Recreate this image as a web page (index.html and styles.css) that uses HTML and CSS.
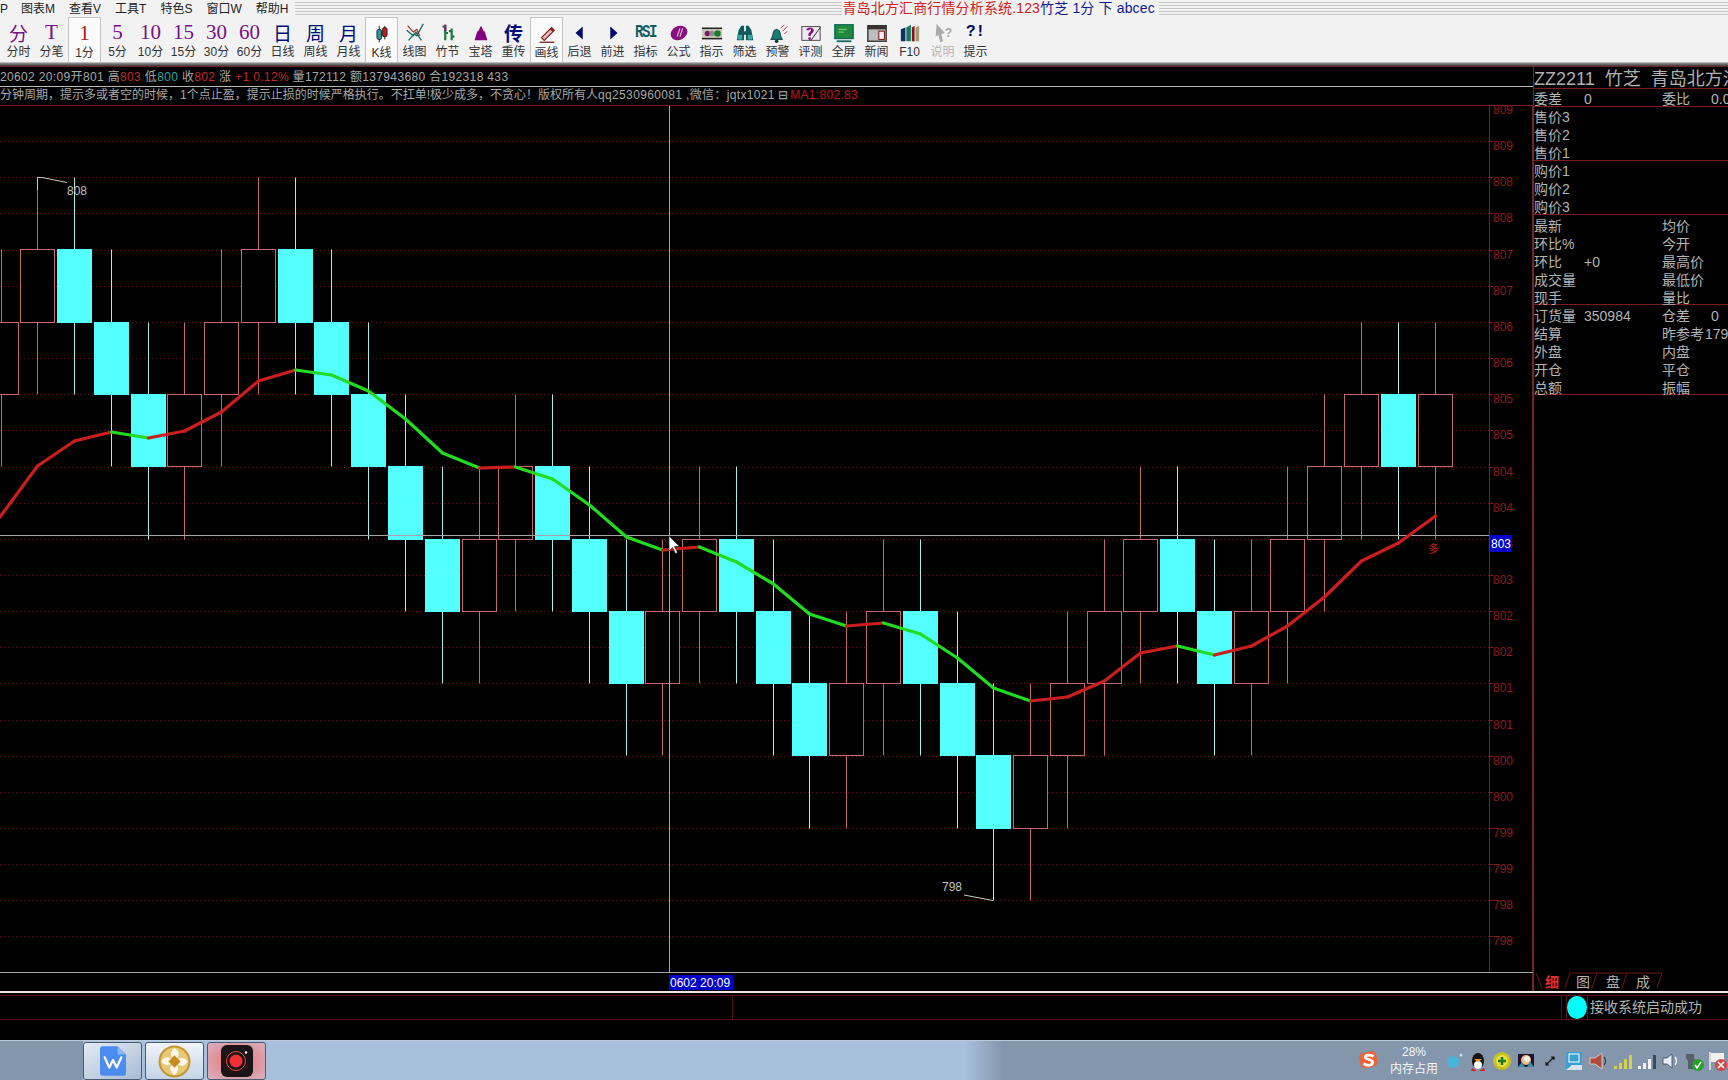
FILE: index.html
```html
<!DOCTYPE html>
<html lang="zh-CN">
<head>
<meta charset="utf-8">
<title>青岛北方汇商行情分析系统</title>
<link rel="stylesheet" href="styles.css">
</head>
<body>
<div class="menubar">
  <span class="menu-item first">P</span>
  <span class="menu-item">图表M</span>
  <span class="menu-item">查看V</span>
  <span class="menu-item">工具T</span>
  <span class="menu-item">特色S</span>
  <span class="menu-item">窗口W</span>
  <span class="menu-item">帮助H</span>
  <span class="stripes left"></span>
  <span class="app-title"><span class="t-red">青岛北方汇商行情分析系统.123</span><span class="t-blue">竹芝 1分 下 abcec</span></span>
  <span class="stripes"></span>
</div>

<div class="toolbar">
  <div class="tb"><span class="tb-top g-purple">分</span><span class="tb-label">分时</span></div>
  <div class="tb"><span class="tb-top g-purple g-serif">T</span><span class="tb-label">分笔</span></div>
  <div class="tb on"><span class="tb-top g-red g-serif">1</span><span class="tb-label">1分</span></div>
  <div class="tb"><span class="tb-top g-purple g-serif">5</span><span class="tb-label">5分</span></div>
  <div class="tb"><span class="tb-top g-purple g-serif">10</span><span class="tb-label">10分</span></div>
  <div class="tb"><span class="tb-top g-purple g-serif">15</span><span class="tb-label">15分</span></div>
  <div class="tb"><span class="tb-top g-purple g-serif">30</span><span class="tb-label">30分</span></div>
  <div class="tb"><span class="tb-top g-purple g-serif">60</span><span class="tb-label">60分</span></div>
  <div class="tb"><span class="tb-top g-navy">日</span><span class="tb-label">日线</span></div>
  <div class="tb"><span class="tb-top g-navy">周</span><span class="tb-label">周线</span></div>
  <div class="tb"><span class="tb-top g-navy">月</span><span class="tb-label">月线</span></div>
  <div class="tb on"><span class="tb-top"><svg class="ico" viewBox="0 0 24 24"><path d="M9 3v18M15 3v15" stroke="#222" stroke-width="1"/><rect x="6.5" y="7" width="5" height="11" rx="2" fill="#2a9a94" stroke="#124"/><rect x="12.5" y="5" width="5" height="10" rx="2" fill="#b02028" stroke="#411"/></svg></span><span class="tb-label">K线</span></div>
  <div class="tb"><span class="tb-top"><svg class="ico" viewBox="0 0 24 24"><path d="M3 9l7 6 3-4 6 9M5 20l6-7 3 2 7-13" fill="none" stroke="#0f6a62" stroke-width="1.4"/><path d="M4 4l6 7 4-3 3 7" fill="none" stroke="#a02020" stroke-width="1.2"/></svg></span><span class="tb-label">线图</span></div>
  <div class="tb"><span class="tb-top"><svg class="ico" viewBox="0 0 24 24"><path d="M9 3v17M9 5H6M9 12h3M16 7v13M16 10h-3M16 16h3" fill="none" stroke="#1a7a3a" stroke-width="2.4"/><path d="M9 3v7" stroke="#7a2a6a" stroke-width="2.4"/></svg></span><span class="tb-label">竹节</span></div>
  <div class="tb"><span class="tb-top"><svg class="ico" viewBox="0 0 24 24"><path d="M12 4l3 6h1l3 10H5l3-10h1z" fill="#800080"/></svg></span><span class="tb-label">宝塔</span></div>
  <div class="tb"><span class="tb-top g-navy g-bold">传</span><span class="tb-label">重传</span></div>
  <div class="tb on"><span class="tb-top"><svg class="ico" viewBox="0 0 24 24"><path d="M6 16L17 5l3 3L9 19z" fill="#e8b8b8" stroke="#7a1a1a" stroke-width="1.2"/><path d="M16 6l3 3" stroke="#a01818" stroke-width="2.5"/><path d="M4 21h16" stroke="#7a1a1a" stroke-width="1.4"/></svg></span><span class="tb-label">画线</span></div>
  <div class="tb"><span class="tb-top"><svg class="ico" viewBox="0 0 24 24"><path d="M15 5v14l-8-7z" fill="#000a70"/></svg></span><span class="tb-label">后退</span></div>
  <div class="tb"><span class="tb-top"><svg class="ico" viewBox="0 0 24 24"><path d="M9 5v14l8-7z" fill="#000a70"/></svg></span><span class="tb-label">前进</span></div>
  <div class="tb"><span class="tb-top g-rsi">RSI</span><span class="tb-label">指标</span></div>
  <div class="tb"><span class="tb-top"><svg class="ico" viewBox="0 0 24 24"><ellipse cx="12" cy="12" rx="9.500" ry="7.500" transform="rotate(-25 12 12)" fill="#8a1080"/><path d="M10 16l3-9M13 16l3-9" stroke="#e8c0e0" stroke-width="1.2"/></svg></span><span class="tb-label">公式</span></div>
  <div class="tb"><span class="tb-top"><svg class="ico wide" viewBox="0 0 24 24"><rect x="1" y="6" width="22" height="2" fill="#222"/><rect x="1" y="17" width="22" height="2" fill="#222"/><rect x="1" y="8" width="22" height="9" fill="#cfc8b8"/><circle cx="7" cy="12.500" r="3" fill="#7a1a6a"/><circle cx="12" cy="12.500" r="3" fill="#8a8a8a"/><circle cx="18" cy="12.500" r="3.500" fill="#1a7a2a"/></svg></span><span class="tb-label">指示</span></div>
  <div class="tb"><span class="tb-top"><svg class="ico" viewBox="0 0 24 24"><path d="M3 20l2-11 3-5h3v6h2V4h3l3 5 2 11h-8v-6h-2v6z" fill="#0f5a5a"/><rect x="4" y="14" width="5" height="5" fill="#3aa8a0"/><rect x="15" y="14" width="5" height="5" fill="#3aa8a0"/></svg></span><span class="tb-label">筛选</span></div>
  <div class="tb"><span class="tb-top"><svg class="ico" viewBox="0 0 24 24"><path d="M4 19c2-2 2-4 3-8s6-4 7 0 1 6 3 8z" fill="#1a7a78" stroke="#0c3a3a"/><circle cx="10.500" cy="21" r="2" fill="#0c3a3a"/><path d="M15 7l4-4M17 10l5-5M19 13l3-3" stroke="#c02040" stroke-width="1"/></svg></span><span class="tb-label">预警</span></div>
  <div class="tb"><span class="tb-top"><svg class="ico" viewBox="0 0 24 24"><rect x="2" y="5" width="20" height="15" fill="#f0e8f0" stroke="#444"/><path d="M12 20L22 6" stroke="#222"/><path d="M7 9c0-4 8-4 8 0 0 3-3 3-3 6h-3c0-4 3-4 3-6s-2-1-2 0z" fill="#8a1080"/><circle cx="10.500" cy="18" r="1.500" fill="#8a1080"/></svg></span><span class="tb-label">评测</span></div>
  <div class="tb"><span class="tb-top"><svg class="ico" viewBox="0 0 24 24"><rect x="2" y="3" width="20" height="15" fill="#1f8a3a" stroke="#0f6a5a" stroke-width="1.500"/><path d="M6 8h9M6 11h6" stroke="#90d890"/><path d="M4 21h16" stroke="#0f6a5a" stroke-width="2"/></svg></span><span class="tb-label">全屏</span></div>
  <div class="tb"><span class="tb-top"><svg class="ico" viewBox="0 0 24 24"><rect x="2" y="4" width="20" height="17" fill="#bcbcbc" stroke="#333" stroke-width="1.500"/><rect x="2" y="4" width="20" height="4" fill="#3a3030"/><rect x="14" y="10" width="6" height="9" fill="#f4f0f0" stroke="#700"/></svg></span><span class="tb-label">新闻</span></div>
  <div class="tb"><span class="tb-top"><svg class="ico" viewBox="0 0 24 24"><path d="M2 8l5-2v15H2z" fill="#103060"/><path d="M8 6l5-3v18H8z" fill="#1a7a60"/><path d="M14 6l3-2v17h-3z" fill="#8a1020"/><path d="M18 6l4-2v17h-4z" fill="#a09a70"/></svg></span><span class="tb-label">F10</span></div>
  <div class="tb"><span class="tb-top"><svg class="ico" viewBox="0 0 24 24"><path d="M5 2l9 10-4 1 2 8-3 1-2-8-3 2z" fill="#a8a8a8"/><text x="14" y="16" class="ico-q">?</text></svg></span><span class="tb-label dim">说明</span></div>
  <div class="tb"><span class="tb-top g-tip">?!</span><span class="tb-label">提示</span></div>
</div>

<div class="sep"></div>

<div class="main">
  <section class="chart-col">
    <div class="quote">20602 20:09开801 高<b class="red">803</b> 低<b class="teal">800</b> 收<b class="red">802</b> 涨 <b class="red">+1 0.12%</b> 量172112 额137943680 合192318 433</div>
    <div class="note">分钟周期，提示多或者空的时候，1个点止盈，提示止损的时候严格执行。不扛单!极少成多，不贪心！版权所有人<span class="latin">qq2530960081 ,微信：jqtx1021</span> <span class="boxmark">⊟</span><b class="ma">MA1:802.83</b></div>
    <svg id="chart" class="chart" viewBox="0 106 1533 885" width="1533" height="885"></svg>
  </section>

  <aside class="panel">
    <div class="p-title">ZZ2211&nbsp; 竹芝 &nbsp;青岛北方汇商行情</div>
    <div class="p-sec rows1">
      <span>委差</span><span>0</span><span>委比</span><span>0.00</span>
    </div>
    <div class="p-sec rows3">
      <span class="wide-l">售价3</span>
      <span class="wide-l">售价2</span>
      <span class="wide-l">售价1</span>
    </div>
    <div class="p-sec rows3">
      <span class="wide-l">购价1</span>
      <span class="wide-l">购价2</span>
      <span class="wide-l">购价3</span>
    </div>
    <div class="p-sec rows5">
      <span>最新</span><span></span><span>均价</span><span></span>
      <span>环比%</span><span></span><span>今开</span><span></span>
      <span>环比</span><span>+0</span><span>最高价</span><span></span>
      <span>成交量</span><span></span><span>最低价</span><span></span>
      <span>现手</span><span></span><span>量比</span><span></span>
    </div>
    <div class="p-sec rows5">
      <span>订货量</span><span>350984</span><span>仓差</span><span>0</span>
      <span>结算</span><span></span><span>昨参考</span><span class="shift">179</span>
      <span>外盘</span><span></span><span>内盘</span><span></span>
      <span>开仓</span><span></span><span>平仓</span><span></span>
      <span>总额</span><span></span><span>振幅</span><span></span>
    </div>
    <svg class="tabs" viewBox="0 0 195 19" width="195" height="19">
      <path class="tab-line" d="M2 1L8 16M31 16L36 1H128L123 16M58 16L63 1M88 16L93 1"/>
      <text class="tab-on" x="11" y="15">细</text>
      <text class="tab" x="42" y="15">图</text>
      <text class="tab" x="72" y="15">盘</text>
      <text class="tab" x="102" y="15">成</text>
    </svg>
  </aside>
</div>

<div class="status">
  <div class="status-row">
    <div class="st-a"></div>
    <div class="st-b"></div>
    <div class="st-dot"><span class="dot"></span></div>
    <div class="st-text">接收系统启动成功</div>
  </div>
</div>

<div class="taskbar">
  <div class="task">
    <svg class="task-ico" viewBox="0 0 28 32"><path d="M3 0h16l9 9v20a3 3 0 0 1-3 3H3a3 3 0 0 1-3-3V3a3 3 0 0 1 3-3z" fill="#4a8cf0"/><path d="M19 0l9 9h-9z" fill="#8ab6f8"/><path d="M5 12l5 11 4-8 4 8 5-11" fill="none" stroke="#fff" stroke-width="2.400" stroke-linejoin="round" stroke-linecap="round"/></svg>
  </div>
  <div class="task light">
    <svg class="task-ico coin" viewBox="0 0 32 32"><circle cx="16" cy="16" r="15.500" fill="#c8962e"/><circle cx="16" cy="16" r="13.500" fill="#e6c878"/><g fill="#fbf6ea"><path d="M16 16C11 11 12 6 16 3c5 3 6 8 0 13z"/><path d="M16 16C11 11 12 6 16 3c5 3 6 8 0 13z" transform="rotate(90 16 16)"/><path d="M16 16C11 11 12 6 16 3c5 3 6 8 0 13z" transform="rotate(180 16 16)"/><path d="M16 16C11 11 12 6 16 3c5 3 6 8 0 13z" transform="rotate(270 16 16)"/></g><path d="M16 10l6 6-6 6-6-6z" fill="#c78a1e"/></svg>
  </div>
  <div class="task rec">
    <svg class="task-ico big" viewBox="0 0 32 32"><rect width="32" height="32" rx="6" fill="#1c1416"/><circle cx="15" cy="16" r="6.500" fill="#f03034"/><circle cx="15" cy="16" r="9.500" fill="none" stroke="#e84a3a" stroke-width="1"/><circle cx="25" cy="7.500" r="1.200" fill="#fff"/></svg>
  </div>
  <div class="tray">
    <svg class="t-s" viewBox="0 0 24 24"><rect x="2" y="3" width="19" height="17" rx="5" transform="rotate(-12 12 12)" fill="#e8663a"/><path d="M17 8c-3-2-9-2-9 1s9 2 8 6-7 3-10 1" fill="none" stroke="#fff" stroke-width="3"/></svg>
    <div class="mem"><span>28%</span><span>内存占用</span></div>
    <svg class="t-i" viewBox="0 0 24 24"><circle cx="11" cy="13" r="6" fill="#4ab4d8"/><circle cx="19" cy="6" r="1.500" fill="#bfe4f0"/></svg>
    <svg class="t-i" viewBox="0 0 24 24"><ellipse cx="12" cy="12" rx="6" ry="8" fill="#111"/><ellipse cx="12" cy="16" rx="4" ry="4" fill="#fff"/><path d="M8 10h8l-4 3z" fill="#f0a020"/><path d="M6 19l5 3H5zM18 19l-5 3h6z" fill="#d82020"/></svg>
    <svg class="t-i" viewBox="0 0 24 24"><circle cx="12" cy="12" r="9" fill="#c8c020"/><circle cx="12" cy="12" r="6" fill="#e8e040"/><path d="M12 8v8M8 12h8" stroke="#1a7a20" stroke-width="2.500"/></svg>
    <svg class="t-i" viewBox="0 0 24 24"><rect x="4" y="5" width="16" height="13" fill="#201028"/><circle cx="12" cy="11" r="5" fill="#e8c080"/><circle cx="13" cy="10" r="3" fill="#f8f0f0"/><path d="M4 18l4-5 3 5zM20 18l-4-6-3 6z" fill="#3a90a0"/></svg>
    <svg class="t-i" viewBox="0 0 24 24"><path d="M8 16l8-8M13 8h3v3M8 13v3h3" fill="none" stroke="#111" stroke-width="1.100"/></svg>
    <svg class="t-i" viewBox="0 0 24 24"><rect x="4" y="3" width="16" height="18" fill="#3aa0d0"/><rect x="7" y="5" width="10" height="8" fill="none" stroke="#fff"/><path d="M4 21l6-5h10v5z" fill="#d8e4e8"/></svg>
    <svg class="t-i" viewBox="0 0 24 24"><path d="M4 9h5l7-5v16l-7-5H4z" fill="#b04a3a" stroke="#e8d8d0" stroke-width=".8"/><path d="M18 8c2 2 2 6 0 8" fill="none" stroke="#333" stroke-width="1.200"/></svg>
    <svg class="t-i" viewBox="0 0 24 24"><path d="M4 17h3v3H4zM9 14h3v6H9zM14 10h3v10h-3zM19 6h3v14h-3z" fill="#d8d048"/></svg>
    <svg class="t-i" viewBox="0 0 24 24"><path d="M4 17h3v3H4zM9 14h3v6H9zM14 10h3v10h-3z" fill="#f4f4f4"/><path d="M19 6h3v14h-3z" fill="#39485a"/></svg>
    <svg class="t-i" viewBox="0 0 24 24"><path d="M5 9h4l5-4v14l-5-4H5z" fill="#e8eef4" stroke="#39485a" stroke-width=".8"/><path d="M17 8c2 2 2 6 0 8" fill="none" stroke="#fff" stroke-width="1.300"/></svg>
    <svg class="t-i" viewBox="0 0 24 24"><path d="M4 5h8v4l2 3v8H6v-8L4 9z" fill="#55606c"/><circle cx="16" cy="16" r="6" fill="#2aa02a"/><path d="M13 16l2 3 4-6" fill="none" stroke="#fff" stroke-width="1.500"/></svg>
    <svg class="t-i" viewBox="0 0 24 24"><path d="M4 3v18" stroke="#eee" stroke-width="1.500"/><path d="M5 4h13v9H5z" fill="#f0f0f0"/><circle cx="15" cy="16" r="6" fill="#d04848"/><path d="M12 13l6 6M18 13l-6 6" stroke="#fff" stroke-width="1.600"/></svg>
  </div>
</div>
<script src="chart.js"></script>
</body>
</html>
```

FILE: styles.css
```css
* { box-sizing: border-box; }
html, body { margin: 0; padding: 0; }
body {
  width: 1728px;
  height: 1080px;
  overflow: hidden;
  background: #000;
  color: #333;
  font: 12px/14px "Liberation Sans", "Noto Sans CJK SC", sans-serif;
}

/* menu bar */
.menubar {
  display: flex;
  align-items: center;
  height: 17px;
  background: #f2f2f2;
  color: #222;
  white-space: nowrap;
}
.menu-item { padding: 0 7px; }
.menu-item.first { padding: 0 6px 0 0; }
.stripes {
  flex: 1;
  align-self: stretch;
  margin: 2px 0 1px;
  background: repeating-linear-gradient(to bottom, #c8c8c8 0, #c8c8c8 1px, #f2f2f2 1px, #f2f2f2 3px);
}
.stripes.left { flex: none; width: 547px; }
.app-title { padding: 0 4px 0 0; font-size: 14px; line-height: 17px; letter-spacing: .15px; }
.t-red { color: #d02020; }
.t-blue { color: #101a90; }

/* toolbar */
.toolbar {
  display: flex;
  height: 45px;
  padding-left: 2px;
  background: #f2f2f2;
}
.tb {
  width: 33px;
  height: 45px;
  padding-top: 2px;
  display: flex;
  flex-direction: column;
  align-items: center;
  border: 1px solid transparent;
  border-bottom: 0;
}
.tb.on {
  background: #fafafa;
  border-color: #c4c4c4;
  padding-top: 3px;
}
.tb-top {
  height: 25px;
  display: flex;
  align-items: center;
  justify-content: center;
  font: 19px/25px "Noto Sans CJK SC", sans-serif;
  white-space: nowrap;
}
.tb-label { font-size: 12px; line-height: 14px; color: #333; white-space: nowrap; }
.tb-label.dim { color: #b4b4b4; }
.g-purple { color: #7a0f86; }
.g-red { color: #a81818; }
.g-navy { color: #000a78; }
.g-bold { font-weight: 700; }
.g-serif { font-family: "Liberation Serif", serif; font-size: 21px; }
.g-rsi {
  font: 700 14px/25px "Liberation Mono", monospace;
  color: #0f5f62;
  letter-spacing: -1.4px;
  transform: scaleY(1.25);
}
.g-tip { font: 700 16px/25px "Liberation Mono", monospace; color: #000a60; }
.ico { width: 22px; height: 22px; display: block; }
.ico.wide { width: 26px; height: 22px; }
.ico-q { font: 700 13px "Liberation Sans", sans-serif; fill: #a8a8a8; }

.sep {
  height: 5px;
  background: linear-gradient(to bottom, #d8d8d8 0, #8a8a8a 25%, #555 60%, #5c1414 100%);
}

/* main area */
.main { display: flex; height: 924px; }
.chart-col { width: 1533px; flex: none; }
.quote {
  height: 20px;
  padding-top: 3px;
  color: #a8a8a8;
  border-bottom: 1px solid #b8b8b8;
  letter-spacing: .35px;
  white-space: nowrap;
  overflow: hidden;
}
.note {
  height: 19px;
  padding-top: 1px;
  color: #a8a8a8;
  border-bottom: 1px solid #7a1c1c;
  white-space: nowrap;
  overflow: hidden;
}
.latin { letter-spacing: .35px; }
.red { color: #c22a2a; font-weight: 400; }
.teal { color: #1fa8a8; font-weight: 400; }
.ma { color: #c01818; font-weight: 400; margin-left: 2px; letter-spacing: .3px; }
.boxmark { color: #b8b8b8; }
.chart { display: block; overflow: visible; }

.wick-r { stroke: #c46a6a; stroke-width: 1; }
.wick-c { stroke: #a8ecec; stroke-width: 1; }
.body-r { fill: #000; stroke: #c46a6a; stroke-width: 1; }
.body-c { fill: #54ffff; }
.grid-line { stroke: #5e1a1a; stroke-width: 1; stroke-dasharray: 1 3; }
.axis-line { stroke: #7a2020; stroke-width: 1; }
.axis-text { font: 12px "Liberation Sans", sans-serif; fill: #8e1c1c; }
.cross { stroke: #a8a4a4; stroke-width: 1; }
.ma-up, .ma-down { fill: none; stroke-width: 3.2; stroke-linecap: round; }
.ma-up { stroke: #cc1e1e; }
.ma-down { stroke: #22dc22; }
.extreme { font: 12px "Liberation Sans", sans-serif; fill: #c0c0c0; }
.extreme-line { fill: none; stroke: #c8c8c8; stroke-width: 1; }
.tag { fill: #0000c8; }
.tag-text { font: 12px "Liberation Sans", sans-serif; fill: #fff; }
.duo { font: 11px "Noto Sans CJK SC", sans-serif; fill: #c81e1e; }
.cursor { fill: #fff; stroke: #222; stroke-width: .6; }

/* right panel */
.panel {
  width: 195px;
  flex: none;
  display: flex;
  flex-direction: column;
  border-left: 1px solid #8a1f1f;
  overflow: hidden;
  color: #b4b4b4;
  font: 14px/18px "Liberation Sans", "Noto Sans CJK SC", sans-serif;
}
.p-title {
  height: 22px;
  flex: none;
  border-bottom: 1px solid #7a1c1c;
  font-size: 18px;
  line-height: 24px;
  color: #b0b0b0;
  white-space: nowrap;
}
.p-sec {
  display: grid;
  flex: none;
  grid-template-columns: 50px 78px 49px 1fr;
  grid-auto-rows: 18px;
  border-bottom: 1px solid #7a1c1c;
  white-space: nowrap;
}
.rows1 { height: 18px; padding-top: 1px; }
.rows3 { height: 54px; padding-top: 1px; }
.rows5 { height: 90px; padding-top: 2px; }
.p-sec span { min-height: 18px; }
.p-sec .wide-l { grid-column: 1 / -1; }
.p-sec .shift { margin-left: -6px; }
.tabs { margin-top: auto; display: block; flex: none; }
.tab-line { fill: none; stroke: #6a1818; stroke-width: 1; }
.tab, .tab-on { font: 14px "Noto Sans CJK SC", sans-serif; fill: #b4b4b4; }
.tab-on { fill: #e03030; font-weight: 700; }

/* status bar */
.status {
  height: 49px;
  padding-top: 2px;
  border-top: 2px solid #f4e4e4;
}
.status-row {
  display: flex;
  height: 25px;
  border-top: 1px solid #5a1010;
  border-bottom: 1px solid #5a1010;
}
.st-a { width: 733px; border-right: 1px solid #5a1010; }
.st-b { width: 829px; border-right: 1px solid #5a1010; }
.st-dot {
  width: 22px;
  margin-left: 4px;
  border-left: 1px solid #5a1010;
  border-right: 1px solid #5a1010;
  display: flex;
  align-items: center;
  justify-content: center;
}
.dot { width: 20px; height: 23px; flex: none; border-radius: 50%; background: #00ffff; }
.st-text { padding-left: 2px; font-size: 14px; line-height: 22px; color: #b4b4b4; white-space: nowrap; }

/* taskbar */
.taskbar {
  display: flex;
  gap: 3px;
  height: 40px;
  padding: 1px 0 0 83px;
  border-top: 1px solid #bccbdb;
  background: linear-gradient(to right, #8496ab 83px, #a9c0dc 83px, #a9c0dc 965px, #8496ab 1003px);
}
.task {
  width: 59px;
  height: 38px;
  display: flex;
  align-items: center;
  justify-content: center;
  border: 1px solid #4a5a70;
  border-radius: 3px;
  background: linear-gradient(150deg, #e4ebf3, #a6bbd4);
}
.task.light { background: linear-gradient(to bottom, #f0f4f8, #c4d4e6); }
.task.rec { background: radial-gradient(ellipse at center, #f06a6a, #dba0aa 70%, #d8b4c0); }
.task-ico { width: 26px; height: 30px; display: block; }
.task-ico.coin { width: 33px; height: 33px; }
.task-ico.big { width: 32px; height: 32px; }
.tray {
  margin-left: auto;
  margin-right: -2px;
  display: flex;
  align-items: center;
  height: 38px;
}
.t-s { width: 22px; height: 22px; margin-right: 6px; margin-top: -3px; }
.mem {
  width: 56px;
  display: flex;
  flex-direction: column;
  align-items: center;
  color: #f4f6f8;
  font-size: 12px;
  line-height: 17px;
}
.t-i { width: 24px; height: 24px; flex: none; }
```

FILE: chart.js
```js
// One entry per candle: top of the one-point body. r = up (hollow), c = down (filled).
var FIRST_INDEX = -1;
var candles = [
  'r806','r807','c807','c806','c805','r805','r806','r807','c807','c806','c805',
  'c804','c803','r803','r804','c804','c803','c802','r802','r803','c803','c802',
  'c801','r801','r802','c802','c801','c800','r800','r801','r802','r803','c803',
  'c802','r802','r803','r804','r805','c805','r805'
];
var maY = [517,466,441,432,438,431,412,381,370,375,391,419,453,468,467,479,505,537,550,547,
  562,584,614,626,623,634,658,688,701,697,681,653,646,655,646,626,597,561,543,516];
var axisLabels = [809,809,808,808,807,807,806,806,805,805,804,804,803,803,802,802,801,801,800,800,799,799,798,798];

function priceY(p) { return Math.round(900 - 72.3 * (p - 798)) + 0.5; }
function candleX(i) { return Math.round(37.3 + 36.77 * i) + 0.5; }

var s = [];

// grid
axisLabels.forEach(function (v, k) {
  var y = Math.round(105 + 36.15 * k) + 0.5;
  if (k > 0) s.push('<line class="grid-line" x1="0" x2="1489" y1="' + y + '" y2="' + y + '"/>');
  s.push('<line class="axis-line" x1="1489" x2="1493" y1="' + y + '" y2="' + y + '"/>');
  s.push('<text class="axis-text" x="1493" y="' + (y + 8) + '">' + v + '</text>');
});
s.push('<line class="axis-line" x1="1489.5" x2="1489.5" y1="106" y2="972"/>');
s.push('<line class="axis-line" x1="1532.5" x2="1532.5" y1="106" y2="991"/>');

// candles
candles.forEach(function (c, n) {
  var i = n + FIRST_INDEX, x = candleX(i), kind = c[0], top = +c.slice(1);
  var cls = kind === 'r' ? 'r' : 'c';
  s.push('<line class="wick-' + cls + '" x1="' + x + '" x2="' + x + '" y1="' + priceY(top + 1) + '" y2="' + priceY(top - 2) + '"/>');
  var yT = priceY(top), h = priceY(top - 1) - yT;
  if (kind === 'r') {
    s.push('<rect class="body-r" x="' + (x - 17) + '" y="' + yT + '" width="34" height="' + h + '"/>');
  } else {
    s.push('<rect class="body-c" x="' + (x - 17.5) + '" y="' + (yT - 0.5) + '" width="35" height="' + (h + 1) + '"/>');
  }
});

// crosshair and frame
s.push('<line class="cross" x1="0" x2="1489" y1="535.5" y2="535.5"/>');
s.push('<line class="cross" x1="669.5" x2="669.5" y1="106" y2="972"/>');
s.push('<line class="cross" x1="0" x2="1533" y1="972.5" y2="972.5"/>');

// moving average, coloured by direction
maY.forEach(function (y, n) {
  if (n === 0) return;
  var x0 = n === 1 ? 0 : candleX(n - 2), x1 = candleX(n - 1), y0 = maY[n - 1];
  s.push('<line class="' + (y <= y0 ? 'ma-up' : 'ma-down') + '" x1="' + x0 + '" y1="' + y0 + '" x2="' + x1 + '" y2="' + y + '"/>');
});

// extremes
s.push('<polyline class="extreme-line" points="37.5,190 37.5,177.5 42,177.5 67,182.500"/>');
s.push('<text class="extreme" x="67" y="195">808</text>');
s.push('<polyline class="extreme-line" points="964,895 993,900.5"/>');
s.push('<text class="extreme" x="942" y="891">798</text>');

// tags
s.push('<rect class="tag" x="1490" y="535" width="22" height="17"/>');
s.push('<text class="tag-text" x="1491" y="548">803</text>');
s.push('<text class="duo" x="1428" y="553">多</text>');
s.push('<rect class="tag" x="669" y="975" width="64" height="15"/>');
s.push('<text class="tag-text" x="670" y="987">0602 20:09</text>');

// mouse pointer
s.push('<path class="cursor" d="M669 536v15l3.500-3.500 3 6 2-1-3-6h5z"/>');

document.getElementById('chart').innerHTML = s.join('');
```
